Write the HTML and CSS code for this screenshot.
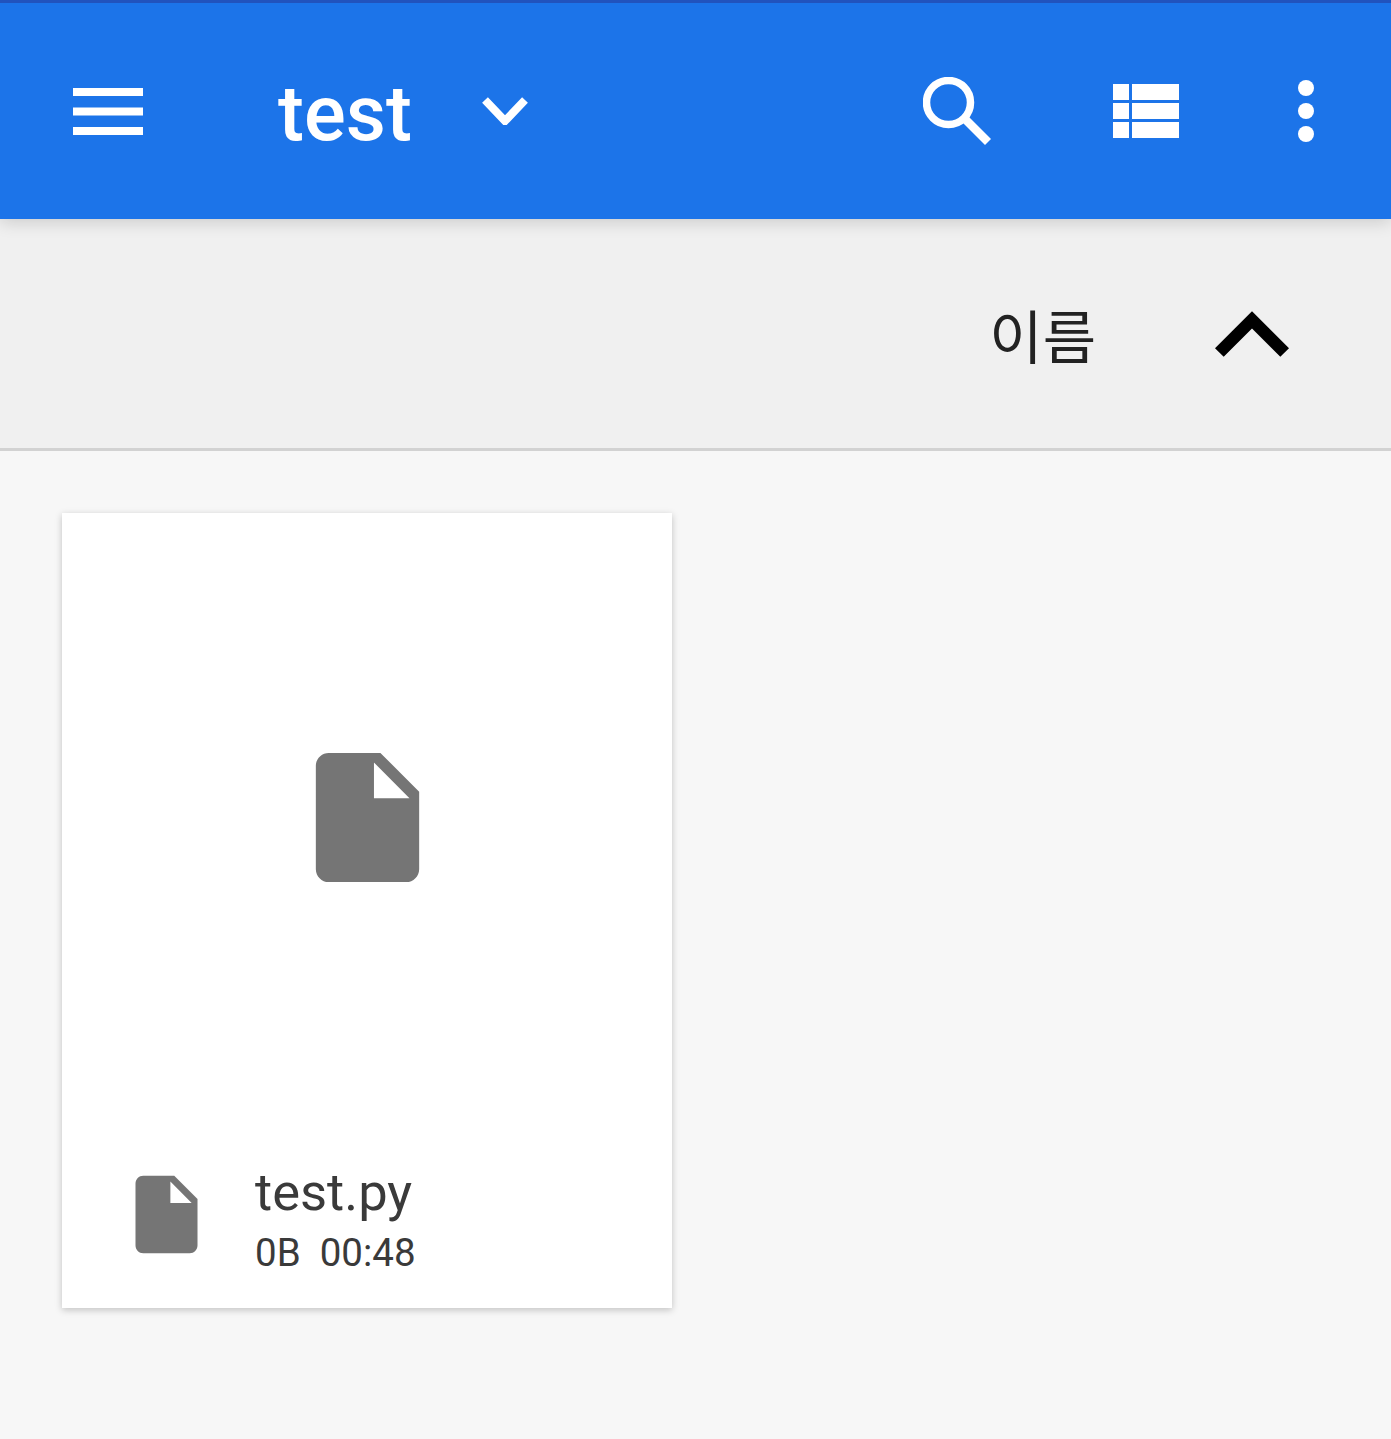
FILE: index.html
```html
<!DOCTYPE html>
<html lang="ko">
<head>
    <meta charset="UTF-8">
    <meta name="viewport" content="width=device-width, initial-scale=1.0">
    <title>test</title>
    <link rel="stylesheet" href="styles.css">
</head>
<body>
    <header class="appbar">
        <svg class="icon-menu" viewBox="0 0 70 47" fill="#fff"><path d="M0 0h70v8H0zM0 19.500h70v8H0zM0 39h70v8H0z"/></svg>
        <h1 class="title">test</h1>
        <svg class="icon-down" viewBox="0 0 46 28" fill="none" stroke="#fff" stroke-width="8"><path d="M3 3L23 24 43 3"/></svg>
        <div class="spacer"></div>
        <svg class="icon-search" viewBox="0 0 68 68" fill="none" stroke="#fff"><circle cx="25.500" cy="25.500" r="22" stroke-width="7.500"/><path d="M42 42l23 23" stroke-width="8.500"/></svg>
        <svg class="icon-list" viewBox="0 0 66 54" fill="#fff"><path d="M0 0h16v16H0zM19 0h47v16H19zM0 19h16v16H0zM19 19h47v16H19zM0 38h16v16H0zM19 38h47v16H19z"/></svg>
        <svg class="icon-more" viewBox="0 0 16 62" fill="#fff"><circle cx="8" cy="8" r="8"/><circle cx="8" cy="31" r="8"/><circle cx="8" cy="54" r="8"/></svg>
    </header>

    <div class="sortbar">
        <span class="sort-label">이름</span>
        <svg class="icon-up" viewBox="6 8 12 7.410"><path d="M12 8l-6 6 1.410 1.410L12 10.830l4.590 4.580L18 14z"/></svg>
    </div>

    <main class="content">
        <article class="card">
            <div class="preview">
                <svg class="file-large" viewBox="0 0 24 24"><path d="M6 2c-1.100 0-2 .9-2 2v16c0 1.100.9 2 2 2h12c1.100 0 2-.9 2-2V8l-6-6H6zm7 7V3.500L18.500 9H13z"/></svg>
            </div>
            <div class="card-footer">
                <svg class="file-small" viewBox="0 0 24 24"><path d="M6 2c-1.100 0-2 .9-2 2v16c0 1.100.9 2 2 2h12c1.100 0 2-.9 2-2V8l-6-6H6zm7 7V3.500L18.500 9H13z"/></svg>
                <div class="file-text">
                    <div class="file-name">test.py</div>
                    <div class="file-meta">0B&nbsp; 00:48</div>
                </div>
            </div>
        </article>
    </main>
</body>
</html>
```

FILE: styles.css
```css
body {
    margin: 0;
    height: 1439px;
    overflow: hidden;
    display: flex;
    flex-direction: column;
    background-color: #f7f7f7;
    font-family: Roboto, "Noto Sans CJK KR", sans-serif;
}

svg {
    display: block;
    flex: none;
}

.appbar {
    position: relative;
    z-index: 1;
    box-sizing: border-box;
    height: 219px;
    border-top: 3px solid #2153bd;
    padding: 0 77px 0 73px;
    display: flex;
    align-items: center;
    background-color: #1c74e9;
    box-shadow: 0 3px 16px rgba(0, 0, 0, 0.16);
}

.icon-menu {
    width: 70px;
    height: 47px;
}

.title {
    margin: 0 0 0 135px;
    font-size: 78px;
    font-weight: 500;
    line-height: 1;
    color: #fff;
    position: relative;
    top: 3px;
}

.icon-down {
    width: 46px;
    height: 28px;
    margin-left: 70px;
}

.spacer {
    flex: 1;
}

.icon-search {
    width: 68px;
    height: 68px;
}

.icon-list {
    width: 66px;
    height: 54px;
    margin-left: 122px;
}

.icon-more {
    width: 16px;
    height: 62px;
    margin-left: 119px;
}

.sortbar {
    box-sizing: border-box;
    height: 232px;
    border-bottom: 3px solid #d2d2d2;
    padding-right: 102px;
    display: flex;
    justify-content: flex-end;
    align-items: center;
    background-color: #f0f0f0;
}

.sort-label {
    font-family: "Noto Sans CJK KR", sans-serif;
    font-size: 58px;
    font-weight: 400;
    line-height: 1;
    color: #222;
}

.icon-up {
    width: 74px;
    height: 46px;
    margin-left: 119px;
    fill: #000;
}

.content {
    flex: 1;
    padding: 62px;
}

.card {
    width: 610px;
    height: 795px;
    display: flex;
    flex-direction: column;
    background-color: #fff;
    box-shadow: 0 2px 7px rgba(0, 0, 0, 0.22);
}

.preview {
    height: 608px;
    display: flex;
    justify-content: center;
    align-items: center;
}

.file-large {
    width: 155px;
    height: 155px;
    fill: #757575;
}

.card-footer {
    flex: 1;
    padding-left: 58px;
    display: flex;
    align-items: center;
}

.file-small {
    width: 93px;
    height: 93px;
    fill: #757575;
}

.file-text {
    margin: 8px 0 0 42px;
    color: #3a3a3a;
}

.file-name {
    font-size: 52.500px;
    line-height: 60px;
}

.file-meta {
    font-size: 38.500px;
    line-height: 46px;
    margin-top: 8px;
}
```
